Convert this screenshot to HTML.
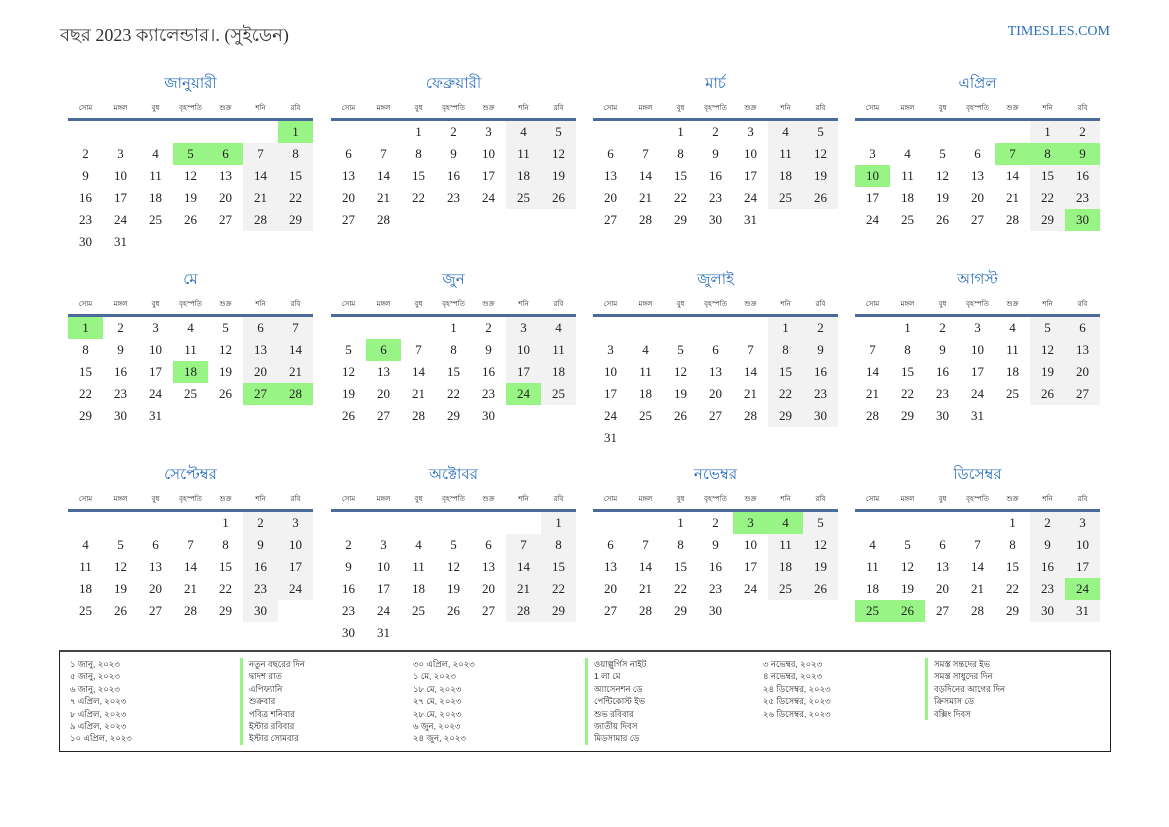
<!DOCTYPE html>
<html><head><meta charset="utf-8">
<style>
*{margin:0;padding:0;box-sizing:border-box}
body{width:1169px;height:827px;background:#fff;position:relative;overflow:hidden;font-family:"Liberation Serif","Noto Serif CJK SC",serif;color:#222}
.title{position:absolute;left:60px;top:21px;font-size:18px;color:#333}
.site{position:absolute;right:59px;top:24px;font-size:14px;color:#2a6ebb}
.m{position:absolute;width:245px}
.mt{text-align:center;color:#2a6ebb;font-size:15px;height:28px;line-height:28px}
.wd{display:flex;height:23px;font-size:7px;line-height:20px;border-bottom:3px solid #4a6a9a}
.wd div{width:35px;text-align:center}
.g{display:grid;grid-template-columns:repeat(7,35px);grid-auto-rows:22px;font-size:13px}
.g div{text-align:center;line-height:22px}
.we{background:#f2f2f2}
.h{background:#99f486 !important}
.leg{position:absolute;left:59px;top:650px;width:1052px;height:102px;border:1px solid #222;border-top:2px solid #444;font-size:8.5px;font-family:"Liberation Sans",sans-serif}
.col{position:absolute;top:6px;line-height:12.4px}
.bar{border-left:3px solid #99f486;padding-left:6px}
</style></head><body>
<div class="title">বছর 2023 ক্যালেন্ডার।. (সুইডেন)</div>
<div class="site">TIMESLES.COM</div>

<div class="m" style="left:68px;top:70px"><div class="mt">জানুয়ারী</div><div class="wd"><div>সোম</div><div>মঙ্গল</div><div>বুধ</div><div>বৃহস্পতি</div><div>শুক্র</div><div>শনি</div><div>রবি</div></div><div class="g"><div></div><div></div><div></div><div></div><div></div><div></div><div class="we h">1</div><div>2</div><div>3</div><div>4</div><div class="h">5</div><div class="h">6</div><div class="we">7</div><div class="we">8</div><div>9</div><div>10</div><div>11</div><div>12</div><div>13</div><div class="we">14</div><div class="we">15</div><div>16</div><div>17</div><div>18</div><div>19</div><div>20</div><div class="we">21</div><div class="we">22</div><div>23</div><div>24</div><div>25</div><div>26</div><div>27</div><div class="we">28</div><div class="we">29</div><div>30</div><div>31</div></div></div>
<div class="m" style="left:331px;top:70px"><div class="mt">ফেব্রুয়ারী</div><div class="wd"><div>সোম</div><div>মঙ্গল</div><div>বুধ</div><div>বৃহস্পতি</div><div>শুক্র</div><div>শনি</div><div>রবি</div></div><div class="g"><div></div><div></div><div>1</div><div>2</div><div>3</div><div class="we">4</div><div class="we">5</div><div>6</div><div>7</div><div>8</div><div>9</div><div>10</div><div class="we">11</div><div class="we">12</div><div>13</div><div>14</div><div>15</div><div>16</div><div>17</div><div class="we">18</div><div class="we">19</div><div>20</div><div>21</div><div>22</div><div>23</div><div>24</div><div class="we">25</div><div class="we">26</div><div>27</div><div>28</div></div></div>
<div class="m" style="left:593px;top:70px"><div class="mt">মার্চ</div><div class="wd"><div>সোম</div><div>মঙ্গল</div><div>বুধ</div><div>বৃহস্পতি</div><div>শুক্র</div><div>শনি</div><div>রবি</div></div><div class="g"><div></div><div></div><div>1</div><div>2</div><div>3</div><div class="we">4</div><div class="we">5</div><div>6</div><div>7</div><div>8</div><div>9</div><div>10</div><div class="we">11</div><div class="we">12</div><div>13</div><div>14</div><div>15</div><div>16</div><div>17</div><div class="we">18</div><div class="we">19</div><div>20</div><div>21</div><div>22</div><div>23</div><div>24</div><div class="we">25</div><div class="we">26</div><div>27</div><div>28</div><div>29</div><div>30</div><div>31</div></div></div>
<div class="m" style="left:855px;top:70px"><div class="mt">এপ্রিল</div><div class="wd"><div>সোম</div><div>মঙ্গল</div><div>বুধ</div><div>বৃহস্পতি</div><div>শুক্র</div><div>শনি</div><div>রবি</div></div><div class="g"><div></div><div></div><div></div><div></div><div></div><div class="we">1</div><div class="we">2</div><div>3</div><div>4</div><div>5</div><div>6</div><div class="h">7</div><div class="we h">8</div><div class="we h">9</div><div class="h">10</div><div>11</div><div>12</div><div>13</div><div>14</div><div class="we">15</div><div class="we">16</div><div>17</div><div>18</div><div>19</div><div>20</div><div>21</div><div class="we">22</div><div class="we">23</div><div>24</div><div>25</div><div>26</div><div>27</div><div>28</div><div class="we">29</div><div class="we h">30</div></div></div>

<div class="m" style="left:68px;top:266px"><div class="mt">মে</div><div class="wd"><div>সোম</div><div>মঙ্গল</div><div>বুধ</div><div>বৃহস্পতি</div><div>শুক্র</div><div>শনি</div><div>রবি</div></div><div class="g"><div class="h">1</div><div>2</div><div>3</div><div>4</div><div>5</div><div class="we">6</div><div class="we">7</div><div>8</div><div>9</div><div>10</div><div>11</div><div>12</div><div class="we">13</div><div class="we">14</div><div>15</div><div>16</div><div>17</div><div class="h">18</div><div>19</div><div class="we">20</div><div class="we">21</div><div>22</div><div>23</div><div>24</div><div>25</div><div>26</div><div class="we h">27</div><div class="we h">28</div><div>29</div><div>30</div><div>31</div></div></div>
<div class="m" style="left:331px;top:266px"><div class="mt">জুন</div><div class="wd"><div>সোম</div><div>মঙ্গল</div><div>বুধ</div><div>বৃহস্পতি</div><div>শুক্র</div><div>শনি</div><div>রবি</div></div><div class="g"><div></div><div></div><div></div><div>1</div><div>2</div><div class="we">3</div><div class="we">4</div><div>5</div><div class="h">6</div><div>7</div><div>8</div><div>9</div><div class="we">10</div><div class="we">11</div><div>12</div><div>13</div><div>14</div><div>15</div><div>16</div><div class="we">17</div><div class="we">18</div><div>19</div><div>20</div><div>21</div><div>22</div><div>23</div><div class="we h">24</div><div class="we">25</div><div>26</div><div>27</div><div>28</div><div>29</div><div>30</div></div></div>
<div class="m" style="left:593px;top:266px"><div class="mt">জুলাই</div><div class="wd"><div>সোম</div><div>মঙ্গল</div><div>বুধ</div><div>বৃহস্পতি</div><div>শুক্র</div><div>শনি</div><div>রবি</div></div><div class="g"><div></div><div></div><div></div><div></div><div></div><div class="we">1</div><div class="we">2</div><div>3</div><div>4</div><div>5</div><div>6</div><div>7</div><div class="we">8</div><div class="we">9</div><div>10</div><div>11</div><div>12</div><div>13</div><div>14</div><div class="we">15</div><div class="we">16</div><div>17</div><div>18</div><div>19</div><div>20</div><div>21</div><div class="we">22</div><div class="we">23</div><div>24</div><div>25</div><div>26</div><div>27</div><div>28</div><div class="we">29</div><div class="we">30</div><div>31</div></div></div>
<div class="m" style="left:855px;top:266px"><div class="mt">আগস্ট</div><div class="wd"><div>সোম</div><div>মঙ্গল</div><div>বুধ</div><div>বৃহস্পতি</div><div>শুক্র</div><div>শনি</div><div>রবি</div></div><div class="g"><div></div><div>1</div><div>2</div><div>3</div><div>4</div><div class="we">5</div><div class="we">6</div><div>7</div><div>8</div><div>9</div><div>10</div><div>11</div><div class="we">12</div><div class="we">13</div><div>14</div><div>15</div><div>16</div><div>17</div><div>18</div><div class="we">19</div><div class="we">20</div><div>21</div><div>22</div><div>23</div><div>24</div><div>25</div><div class="we">26</div><div class="we">27</div><div>28</div><div>29</div><div>30</div><div>31</div></div></div>

<div class="m" style="left:68px;top:461px"><div class="mt">সেপ্টেম্বর</div><div class="wd"><div>সোম</div><div>মঙ্গল</div><div>বুধ</div><div>বৃহস্পতি</div><div>শুক্র</div><div>শনি</div><div>রবি</div></div><div class="g"><div></div><div></div><div></div><div></div><div>1</div><div class="we">2</div><div class="we">3</div><div>4</div><div>5</div><div>6</div><div>7</div><div>8</div><div class="we">9</div><div class="we">10</div><div>11</div><div>12</div><div>13</div><div>14</div><div>15</div><div class="we">16</div><div class="we">17</div><div>18</div><div>19</div><div>20</div><div>21</div><div>22</div><div class="we">23</div><div class="we">24</div><div>25</div><div>26</div><div>27</div><div>28</div><div>29</div><div class="we">30</div></div></div>
<div class="m" style="left:331px;top:461px"><div class="mt">অক্টোবর</div><div class="wd"><div>সোম</div><div>মঙ্গল</div><div>বুধ</div><div>বৃহস্পতি</div><div>শুক্র</div><div>শনি</div><div>রবি</div></div><div class="g"><div></div><div></div><div></div><div></div><div></div><div></div><div class="we">1</div><div>2</div><div>3</div><div>4</div><div>5</div><div>6</div><div class="we">7</div><div class="we">8</div><div>9</div><div>10</div><div>11</div><div>12</div><div>13</div><div class="we">14</div><div class="we">15</div><div>16</div><div>17</div><div>18</div><div>19</div><div>20</div><div class="we">21</div><div class="we">22</div><div>23</div><div>24</div><div>25</div><div>26</div><div>27</div><div class="we">28</div><div class="we">29</div><div>30</div><div>31</div></div></div>
<div class="m" style="left:593px;top:461px"><div class="mt">নভেম্বর</div><div class="wd"><div>সোম</div><div>মঙ্গল</div><div>বুধ</div><div>বৃহস্পতি</div><div>শুক্র</div><div>শনি</div><div>রবি</div></div><div class="g"><div></div><div></div><div>1</div><div>2</div><div class="h">3</div><div class="we h">4</div><div class="we">5</div><div>6</div><div>7</div><div>8</div><div>9</div><div>10</div><div class="we">11</div><div class="we">12</div><div>13</div><div>14</div><div>15</div><div>16</div><div>17</div><div class="we">18</div><div class="we">19</div><div>20</div><div>21</div><div>22</div><div>23</div><div>24</div><div class="we">25</div><div class="we">26</div><div>27</div><div>28</div><div>29</div><div>30</div></div></div>
<div class="m" style="left:855px;top:461px"><div class="mt">ডিসেম্বর</div><div class="wd"><div>সোম</div><div>মঙ্গল</div><div>বুধ</div><div>বৃহস্পতি</div><div>শুক্র</div><div>শনি</div><div>রবি</div></div><div class="g"><div></div><div></div><div></div><div></div><div>1</div><div class="we">2</div><div class="we">3</div><div>4</div><div>5</div><div>6</div><div>7</div><div>8</div><div class="we">9</div><div class="we">10</div><div>11</div><div>12</div><div>13</div><div>14</div><div>15</div><div class="we">16</div><div class="we">17</div><div>18</div><div>19</div><div>20</div><div>21</div><div>22</div><div class="we">23</div><div class="we h">24</div><div class="h">25</div><div class="h">26</div><div>27</div><div>28</div><div>29</div><div class="we">30</div><div class="we">31</div></div></div>

<div class="leg">
<div class="col" style="left:10px">১ জানু, ২০২৩<br>৫ জানু, ২০২৩<br>৬ জানু, ২০২৩<br>৭ এপ্রিল, ২০২৩<br>৮ এপ্রিল, ২০২৩<br>৯ এপ্রিল, ২০২৩<br>১০ এপ্রিল, ২০২৩</div>
<div class="col bar" style="left:180px">নতুন বছরের দিন<br>দ্বাদশ রাত<br>এপিফ্যানি<br>শুক্রবার<br>পবিত্র শনিবার<br>ইস্টার রবিবার<br>ইস্টার সোমবার</div>
<div class="col" style="left:353px">৩০ এপ্রিল, ২০২৩<br>১ মে, ২০২৩<br>১৮ মে, ২০২৩<br>২৭ মে, ২০২৩<br>২৮ মে, ২০২৩<br>৬ জুন, ২০২৩<br>২৪ জুন, ২০২৩</div>
<div class="col bar" style="left:525px">ওয়াল্পুর্গিস নাইট<br>1 লা মে<br>অ্যাসেনশন ডে<br>পেন্টিকোস্ট ইভ<br>শুভ রবিবার<br>জাতীয় দিবস<br>মিডসামার ডে</div>
<div class="col" style="left:703px">৩ নভেম্বর, ২০২৩<br>৪ নভেম্বর, ২০২৩<br>২৪ ডিসেম্বর, ২০২৩<br>২৫ ডিসেম্বর, ২০২৩<br>২৬ ডিসেম্বর, ২০২৩</div>
<div class="col bar" style="left:865px">সমস্ত সন্তদের ইভ<br>সমস্ত সাধুদের দিন<br>বড়দিনের আগের দিন<br>ক্রিসমাস ডে<br>বক্সিং দিবস</div>
</div>
</body></html>
